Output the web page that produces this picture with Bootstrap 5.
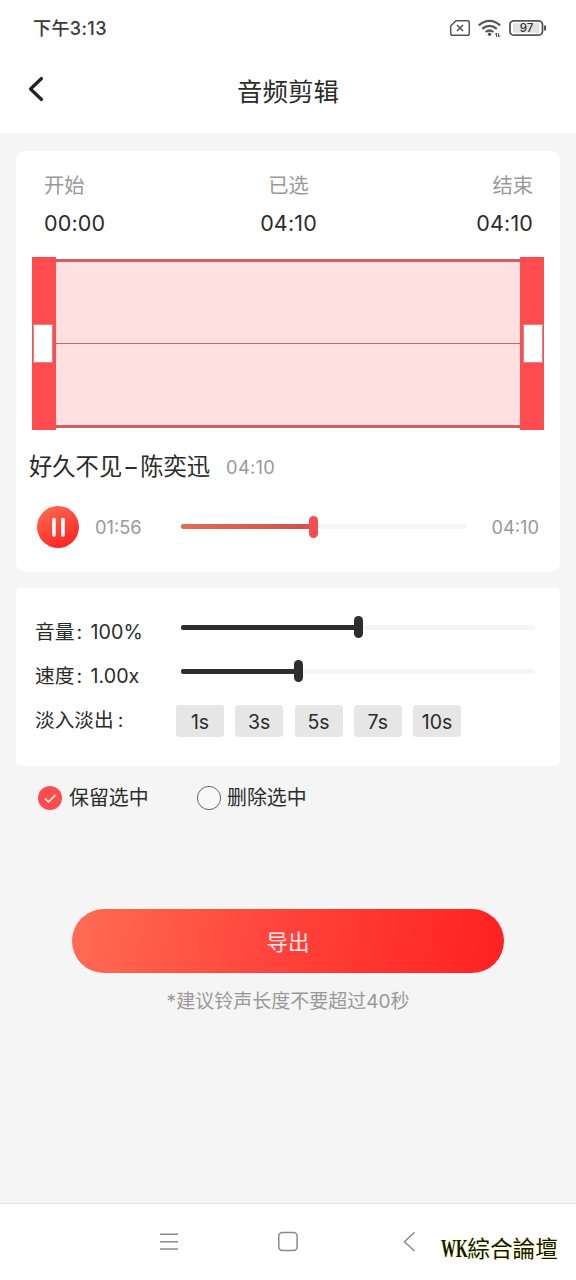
<!DOCTYPE html>
<html lang="zh-CN">
<head>
<meta charset="utf-8">
<meta name="viewport" content="width=device-width, initial-scale=1">
<title>音频剪辑</title>
<link rel="stylesheet" href="https://cdn.jsdelivr.net/npm/bootstrap@5.3.0/dist/css/bootstrap.min.css">
<style>
body{font-family:Inter,"Noto Sans CJK SC",sans-serif;color:#2b2b2b;background:#f5f5f5;line-height:1}
.screen{height:1280px;overflow:hidden}
.status-bar{height:56px;padding:0 29px 0 33px;font-size:18px;font-weight:500;color:#3a3a3a}
.clock{padding-top:2px;letter-spacing:.4px}
.title-bar{height:77px;padding:0 28px 9px}
.title-bar h1{font-size:25.5px;font-weight:400}
.side{width:24px}
.trim-card{margin-top:18px;height:421px;border-radius:9px}
.mix-card{margin-top:16px;height:178px;border-radius:5px;padding:21px 24px 0 19px}
.times{height:106px;padding:24px 27px 0 28px}
.times > div{flex:1 1 0}
.times .lbl{font-size:20.3px;line-height:22px;color:#999}
.times .val{font-size:21.5px;line-height:22px;margin-top:15px;letter-spacing:.15px}
.wave{height:173px;margin:0 16px}
.grip{width:24px;padding:0 1px;background:#ff4d4f}
.grip i{width:20px;height:39px;background:#fff;border:1px solid #e88083}
.wave-body{height:169px;margin-top:2px;background:#ffe0e0;border:solid #cf5f62;border-width:3px 0}
.wave-body hr{margin:0;border:0;height:1px;background:#cb6266;opacity:1}
.song{height:74px;padding:0 14px 0 13px}
.song .name{font-size:23.3px}
.dash{display:inline-block;width:18px;text-align:center;transform:scaleX(1.5)}
.small-time{font-size:18.3px;color:#999}
.song .small-time{letter-spacing:.3px;padding-top:1px}
.player{height:46px;padding:0 21px}
.pause{width:42px;height:42px}
.track{height:22px}
.rail{height:5px;background:#f5f5f5;border-radius:2px}
.fill{height:5px;border-radius:2px 0 0 2px;background:#2d2d2d}
.knob{width:9px;height:22px;border-radius:4.5px;background:#2d2d2d}
.track.red{margin-top:-1px}
.track.red .fill{background:linear-gradient(90deg,#df6c58,#d4504b)}
.track.red .knob{background:#f74d51}
.mix-row{height:44px;font-size:19.7px}
.mix-row .cap{width:146px;padding-top:3px}
.cap b{font-weight:400;margin:0 3px 0 2px}
.mix-row .track{width:354px;margin-top:-8px}
.fade-btn{width:48px;height:32px;padding:1px 0 0;border:0;border-radius:4px;background:#e6e6e6;color:#2b2b2b;font-size:19.5px;line-height:33px}
.choices{height:64px;font-size:19.9px}
.choices span{padding-top:2px}
.export{width:432px;height:64px;margin:79px auto 0;padding:4px 0 0;border:0;background:linear-gradient(100deg,#ff6c56,#ff433c 48%,#ff2122);color:#ffeae5;font-size:21.5px;line-height:1}
.hint{margin-top:19px;font-size:19px;line-height:20px;color:#999}
.sys-nav{height:77px;border-top:1px solid #e2e2e2}
.stamp{right:18px;bottom:18px;color:#161600;font-family:"Liberation Serif","Noto Sans CJK TC",serif;font-size:22.7px;line-height:24px;text-shadow:0 0 3px #ffffb0}
.stamp span{display:inline-block;width:26px}
.stamp span b{display:inline-block;transform:scale(.66,1.15);transform-origin:0 70%}
</style>
<script src="https://cdn.jsdelivr.net/npm/bootstrap@5.3.0/dist/js/bootstrap.bundle.min.js"></script>
</head>
<body>
<div class="screen d-flex flex-column">
  <div class="status-bar bg-white d-flex align-items-center justify-content-between">
    <span class="clock">下午3:13</span>
    <svg width="98" height="22" viewBox="449 17 98 22" fill="none" stroke="#555">
      <path d="M456 20.800H467.500Q469.300 20.800 469.300 22.600V33.400Q469.300 35.200 467.500 35.200H452.500Q450.700 35.200 450.700 33.400V26Z" stroke-width="1.500"/>
      <path d="M457 25l6 6M463 25l-6 6" stroke-width="1.600"/>
      <path d="M478.800 25.300Q489.500 16.500 500.200 25.300M482.200 28.800Q489.500 22.800 496.800 28.800M485.600 32Q489.500 29 493.400 32" stroke-width="2.200"/>
      <circle cx="489.500" cy="34.300" r="1.700" fill="#555" stroke="none"/>
      <path d="M496.500 37v-4l-1.500 1.800M498.500 33v4l1.500-1.800" stroke-width="1"/>
      <rect x="510" y="20.800" width="32.500" height="14.400" rx="4" stroke-width="1.800"/>
      <rect x="513" y="23.300" width="26.500" height="9.400" rx="1.500" fill="#e2e2e2" stroke="none"/>
      <path d="M545 25.500v5" stroke-width="2"/>
      <text x="526.500" y="32.200" text-anchor="middle" font-size="11.500" fill="#333" stroke="none">97</text>
    </svg>
  </div>
  <header class="title-bar bg-white d-flex align-items-center justify-content-between">
    <svg class="side" height="28" viewBox="28 76 24 28" fill="none" stroke="#222" stroke-width="3.200" stroke-linecap="round" stroke-linejoin="round"><path d="M41.500 78.500L30.500 89L41.500 99.500"/></svg>
    <h1 class="m-0 pt-1">音频剪辑</h1>
    <span class="side"></span>
  </header>

  <main class="flex-grow-1 px-3">
    <section class="trim-card bg-white">
      <div class="times d-flex">
        <div><div class="lbl">开始</div><div class="val">00:00</div></div>
        <div class="text-center"><div class="lbl">已选</div><div class="val">04:10</div></div>
        <div class="text-end"><div class="lbl">结束</div><div class="val">04:10</div></div>
      </div>
      <div class="wave d-flex">
        <div class="grip d-flex align-items-center"><i></i></div>
        <div class="wave-body flex-grow-1 d-flex flex-column justify-content-center"><hr></div>
        <div class="grip d-flex align-items-center justify-content-end"><i></i></div>
      </div>
      <div class="song d-flex align-items-center">
        <span class="name">好久不见<span class="dash">-</span>陈奕迅</span><span class="small-time ms-3">04:10</span>
      </div>
      <div class="player d-flex align-items-center">
        <svg class="pause" viewBox="0 0 42 42"><defs><linearGradient id="pg" x1="0.200" y1="0" x2="0.700" y2="1"><stop stop-color="#ff6952"/><stop offset="1" stop-color="#ff2424"/></linearGradient></defs><circle cx="21" cy="21" r="21" fill="url(#pg)"/><path d="M17 13.500v15.500M26 13.500v15.500" stroke="#fff" stroke-width="3.600" stroke-linecap="round"/></svg>
        <span class="small-time" style="width:86px;margin-left:16px">01:56</span>
        <div class="track red d-flex align-items-center flex-grow-1"><div class="fill" style="width:128px"></div><div class="knob"></div><div class="rail flex-grow-1"></div></div>
        <span class="small-time text-end" style="width:72px">04:10</span>
      </div>
    </section>

    <section class="mix-card bg-white">
      <div class="mix-row d-flex align-items-center"><span class="cap">音量<b>:</b> 100%</span>
        <div class="track d-flex align-items-center"><div class="fill" style="width:173px"></div><div class="knob"></div><div class="rail flex-grow-1"></div></div></div>
      <div class="mix-row d-flex align-items-center"><span class="cap">速度<b>:</b> 1.00x</span>
        <div class="track d-flex align-items-center"><div class="fill" style="width:113px"></div><div class="knob"></div><div class="rail flex-grow-1"></div></div></div>
      <div class="mix-row d-flex align-items-center pt-1"><span style="width:141px">淡入淡出<b class="fw-normal ms-1">:</b></span>
        <div class="d-flex" style="gap:11.250px"><button class="btn fade-btn">1s</button><button class="btn fade-btn">3s</button><button class="btn fade-btn">5s</button><button class="btn fade-btn">7s</button><button class="btn fade-btn">10s</button></div></div>
    </section>

    <div class="choices d-flex align-items-center">
      <svg width="26" height="26" viewBox="0 0 26 26" style="margin-left:21px"><circle cx="13" cy="13" r="12" fill="#fb4c50"/><path d="M7.800 13.300l3.700 3.500 7-6.800" fill="none" stroke="#ffe4cf" stroke-width="1.800"/></svg>
      <span style="margin-left:6px;width:127px">保留选中</span>
      <svg width="26" height="26" viewBox="0 0 26 26"><circle cx="13" cy="13" r="11.600" fill="#f8f8f8" stroke="#666"/></svg>
      <span style="margin-left:5px">删除选中</span>
    </div>
    <button class="btn export rounded-pill d-block">导出</button>
    <p class="hint text-center mb-0">*建议铃声长度不要超过40秒</p>
  </main>

  <footer class="sys-nav bg-white position-relative">
    <svg class="d-block" width="576" height="76" viewBox="0 1204 576 76" fill="none" stroke="#8a8a8a" stroke-width="1.500"><path d="M160 1234.300h18M160 1241.700h18M160 1249h18"/><rect x="278.800" y="1232.600" width="18.300" height="18" rx="3.500"/><path d="M414.500 1232.300L404.500 1241.700L414.500 1251"/></svg>
    <div class="stamp position-absolute text-nowrap"><span><b>WK</b></span>綜合論壇</div>
  </footer>
</div>
</body>
</html>
